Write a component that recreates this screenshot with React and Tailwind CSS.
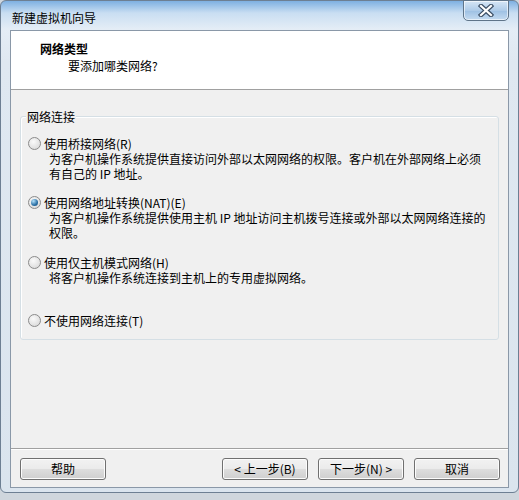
import React from 'react';

const FONT = { fontFamily: '"Noto Sans CJK SC", "Noto Sans", sans-serif' };

const Radio = ({ checked }) => (
    <span className="w-[13px] h-[13px] rounded-full border border-[#8b8b8b] bg-[radial-gradient(circle_at_40%_35%,#fafafa,#d4d4d4)] flex items-center justify-center shrink-0">
        {checked && (
            <span className="w-[7px] h-[7px] rounded-full bg-[radial-gradient(circle_at_35%_30%,#b4e2fb,#2a6fa5_60%,#174f7d)]" />
        )}
    </span>
);

const Button = ({ children }) => (
    <button className="w-[86px] h-[22px] rounded-[3px] border border-[#707070] bg-[linear-gradient(#f2f2f2_0%,#ebebeb_48%,#dddddd_52%,#cfcfcf_100%)] shadow-[inset_0_0_0_1px_#fcfcfc] text-[12px] leading-[20px] text-black">
        {children}
    </button>
);

const OPTIONS = [
    {
        label: '使用桥接网络(R)',
        lines: ['为客户机操作系统提供直接访问外部以太网网络的权限。客户机在外部网络上必须', '有自己的 IP 地址。'],
        gap: 'mt-0',
    },
    {
        label: '使用网络地址转换(NAT)(E)',
        lines: ['为客户机操作系统提供使用主机 IP 地址访问主机拨号连接或外部以太网网络连接的', '权限。'],
        checked: true,
        gap: 'mt-[14px]',
    },
    {
        label: '使用仅主机模式网络(H)',
        lines: ['将客户机操作系统连接到主机上的专用虚拟网络。'],
        gap: 'mt-[15px]',
    },
    {
        label: '不使用网络连接(T)',
        lines: [],
        gap: 'mt-[28px]',
    },
];

export default function App() {
    return (
        <div className="w-[519px] h-[500px] overflow-hidden bg-[#cfd6dd] text-black" style={FONT}>
            {/* Window frame */}
            <div className="h-[493px] rounded-[6px] border border-[#6d7f93] bg-[linear-gradient(180deg,#7eb0e2_0px,#c9def2_12px,#e4edf6_28px,#dfe8f1_60px,#dae4ee_100%)] flex flex-col">
                {/* Title bar */}
                <div className="h-[29px] flex justify-between items-start">
                    <div className="pl-[11px] pt-[9px] text-[12px] leading-[16px]">新建虚拟机向导</div>
                    <div className="mr-[9px] -mt-px w-[46px] h-[21px] rounded-b-[5px] border border-[#5f7489] bg-[linear-gradient(180deg,#d6e6f6,#aecbe8_50%,#9dc0e3_51%,#c5dbf0)] shadow-[inset_0_0_0_1px_rgba(255,255,255,0.6)] flex items-center justify-center">
                        <svg width="16" height="13" viewBox="0 0 16 13">
                            <path d="M3 2 L13 11 M13 2 L3 11" stroke="#3b4d63" strokeWidth="4.5" strokeLinecap="square" />
                            <path d="M3 2 L13 11 M13 2 L3 11" stroke="#ffffff" strokeWidth="2.2" strokeLinecap="square" />
                        </svg>
                    </div>
                </div>

                {/* Client area */}
                <div className="mx-[9px] h-[458px] border border-[#8a98a8] bg-[#f0f0f0] flex flex-col">
                    {/* Header */}
                    <div className="h-[59px] bg-white border-b border-[#a0a0a0] pl-[29px] pt-[10px] text-[12px] leading-[16px]">
                        <div className="font-bold">网络类型</div>
                        <div className="ml-[28px] mt-px">要添加哪类网络?</div>
                    </div>

                    {/* Body */}
                    <div className="flex-1 flex flex-col">
                        <div className="relative mt-[26px] ml-[9px] w-[479px] h-[224px] rounded-[3px] border border-[#d5dfe5] shadow-[inset_1px_1px_0_#ffffff]">
                            <div className="absolute left-[5px] -top-[8px] px-[1px] bg-[#f0f0f0] text-[12px] leading-[15px]">网络连接</div>
                            <div className="pt-[19px] pl-[7px] text-[12px] leading-[15px]">
                                {OPTIONS.map(opt => (
                                    <div key={opt.label} className={opt.gap}>
                                        <div className="flex items-center gap-[3px] h-[15px]">
                                            <Radio checked={opt.checked} />
                                            <span>{opt.label}</span>
                                        </div>
                                        {opt.lines.map(line => (
                                            <div key={line} className="ml-[21px] whitespace-nowrap">{line}</div>
                                        ))}
                                    </div>
                                ))}
                            </div>
                        </div>

                        <div className="flex-1" />

                        {/* Separator */}
                        <div className="border-t border-[#a0a0a0] border-b border-b-white" />

                        {/* Buttons */}
                        <div className="flex justify-between pl-[9px] pr-[8px] pt-[8px] pb-[7px]">
                            <Button>帮助</Button>
                            <div className="flex gap-[10px]">
                                <Button>&lt; 上一步(B)</Button>
                                <Button>下一步(N) &gt;</Button>
                                <Button>取消</Button>
                            </div>
                        </div>
                    </div>
                </div>
            </div>
        </div>
    );
}
